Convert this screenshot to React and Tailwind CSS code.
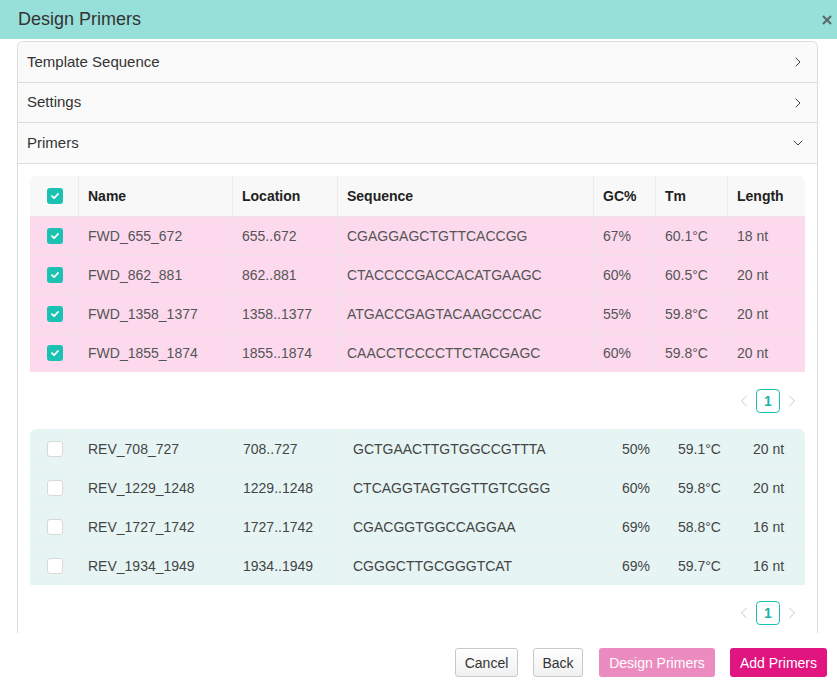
import React from 'react';
import { ChevronRight, ChevronDown, ChevronLeft } from 'lucide-react';

const forwardPrimers = [
    { name: 'FWD_655_672', location: '655..672', sequence: 'CGAGGAGCTGTTCACCGG', gc: '67%', tm: '60.1°C', length: '18 nt' },
    { name: 'FWD_862_881', location: '862..881', sequence: 'CTACCCCGACCACATGAAGC', gc: '60%', tm: '60.5°C', length: '20 nt' },
    { name: 'FWD_1358_1377', location: '1358..1377', sequence: 'ATGACCGAGTACAAGCCCAC', gc: '55%', tm: '59.8°C', length: '20 nt' },
    { name: 'FWD_1855_1874', location: '1855..1874', sequence: 'CAACCTCCCCTTCTACGAGC', gc: '60%', tm: '59.8°C', length: '20 nt' },
];

const reversePrimers = [
    { name: 'REV_708_727', location: '708..727', sequence: 'GCTGAACTTGTGGCCGTTTA', gc: '50%', tm: '59.1°C', length: '20 nt' },
    { name: 'REV_1229_1248', location: '1229..1248', sequence: 'CTCAGGTAGTGGTTGTCGGG', gc: '60%', tm: '59.8°C', length: '20 nt' },
    { name: 'REV_1727_1742', location: '1727..1742', sequence: 'CGACGGTGGCCAGGAA', gc: '69%', tm: '58.8°C', length: '16 nt' },
    { name: 'REV_1934_1949', location: '1934..1949', sequence: 'CGGGCTTGCGGGTCAT', gc: '69%', tm: '59.7°C', length: '16 nt' },
];

const Checkbox = ({ checked }) => (
    checked ? (
        <span className="w-4 h-4 rounded-[3px] bg-[#1bc2b3] flex items-center justify-center">
            <svg width="10" height="10" viewBox="0 0 10 10" fill="none">
                <path d="M2 5.2 4.1 7.2 8 3" stroke="white" strokeWidth="1.8" strokeLinecap="round" strokeLinejoin="round" />
            </svg>
        </span>
    ) : (
        <span className="w-4 h-4 rounded-[3px] bg-white border border-[#d9d9d9]"></span>
    )
);

const Pager = () => (
    <div className="flex items-center justify-end gap-[2px] pr-[3px]">
        <ChevronLeft size={20} strokeWidth={1} className="text-[#bdbdbd]" />
        <span className="w-6 h-6 rounded border border-[#1bc2b3] text-[#1bb3a6] font-bold text-sm flex items-center justify-center">1</span>
        <ChevronRight size={20} strokeWidth={1} className="text-[#bdbdbd]" />
    </div>
);

const AccordionHeader = ({ title, open, height }) => (
    <div className={`${height} flex items-center justify-between pl-[9px] pr-[11px] bg-[#fafafa] border-b border-[#ddd] text-[15px] text-[#333]`}>
        <span>{title}</span>
        {open
            ? <ChevronDown size={16} strokeWidth={1.4} className="text-[#333]" />
            : <ChevronRight size={16} strokeWidth={1.4} className="text-[#333]" />}
    </div>
);

const fwdCols = 'grid grid-cols-[48px_154px_105px_256px_62px_72px_1fr]';
const revCols = 'grid grid-cols-[48px_155px_110px_269px_56px_76px_1fr]';

const App = () => {
    return (
        <div className="w-[837px] h-[694px] bg-white overflow-hidden" style={{ fontFamily: '"Liberation Sans", Arial, sans-serif' }}>
            <div className="h-[39px] bg-[#97e0d9] flex items-center justify-between pl-[18px] pr-[5px]">
                <h1 className="text-[18px] text-[#333]">Design Primers</h1>
                <svg width="10" height="10" viewBox="0 0 10 10" className="mt-[1px]">
                    <path d="M1 1 9 9M9 1 1 9" stroke="#5c6a6e" strokeWidth="2.2" />
                </svg>
            </div>

            <div className="mt-[2px] ml-[17px] mr-[19px] h-[592px] border border-b-0 border-[#ddd] rounded-t-md overflow-hidden">
                <AccordionHeader title="Template Sequence" height="h-[41px]" />
                <AccordionHeader title="Settings" height="h-[40px]" />
                <AccordionHeader title="Primers" height="h-[41px]" open />

                <div className="px-3 pt-3 text-sm">
                    {/* forward primers */}
                    <div className="rounded-t-md overflow-hidden">
                        <div className={`${fwdCols} h-[40px] bg-[#f8f8f8] font-bold text-[#222]`}>
                            <div className="flex items-center justify-center pl-px"><Checkbox checked /></div>
                            <div className="flex items-center px-[9px] border-l border-[#ececec]">Name</div>
                            <div className="flex items-center px-[9px] border-l border-[#ececec]">Location</div>
                            <div className="flex items-center px-[9px] border-l border-[#ececec]">Sequence</div>
                            <div className="flex items-center px-[9px] border-l border-[#ececec]">GC%</div>
                            <div className="flex items-center px-[9px] border-l border-[#ececec]">Tm</div>
                            <div className="flex items-center px-[9px] border-l border-[#ececec]">Length</div>
                        </div>
                        {forwardPrimers.map(p => (
                            <div key={p.name} className={`${fwdCols} h-[39px] bg-[#fcd9ed] border-t border-[#efe4ea] text-[#555]`}>
                                <div className="flex items-center justify-center pl-px"><Checkbox checked /></div>
                                <div className="flex items-center px-[9px] border-l border-[#efe4ea]">{p.name}</div>
                                <div className="flex items-center px-[9px] border-l border-[#efe4ea]">{p.location}</div>
                                <div className="flex items-center px-[9px] border-l border-[#efe4ea]">{p.sequence}</div>
                                <div className="flex items-center px-[9px] border-l border-[#efe4ea]">{p.gc}</div>
                                <div className="flex items-center px-[9px] border-l border-[#efe4ea]">{p.tm}</div>
                                <div className="flex items-center px-[9px] border-l border-[#efe4ea]">{p.length}</div>
                            </div>
                        ))}
                    </div>
                    <div className="h-[57px] flex items-center justify-end">
                        <Pager />
                    </div>

                    {/* reverse primers */}
                    <div className="rounded-t-md overflow-hidden">
                        {reversePrimers.map((p, i) => (
                            <div key={p.name} className={`${revCols} h-[39px] bg-[#e6f5f4] text-[#444] ${i > 0 ? 'border-t border-[#ecf1f0]' : ''}`}>
                                <div className="flex items-center justify-center pl-px"><Checkbox /></div>
                                <div className="flex items-center px-[9px] border-l border-[#ecf1f0]">{p.name}</div>
                                <div className="flex items-center px-[9px] border-l border-[#ecf1f0]">{p.location}</div>
                                <div className="flex items-center px-[9px] border-l border-[#ecf1f0]">{p.sequence}</div>
                                <div className="flex items-center px-[9px] border-l border-[#ecf1f0]">{p.gc}</div>
                                <div className="flex items-center px-[9px] border-l border-[#ecf1f0]">{p.tm}</div>
                                <div className="flex items-center px-[8px] border-l border-[#ecf1f0]">{p.length}</div>
                            </div>
                        ))}
                    </div>
                    <div className="h-[55px] flex items-center justify-end">
                        <Pager />
                    </div>
                </div>
            </div>

            <div className="flex justify-end pr-[10px] mt-[15px] text-sm">
                <button className="h-[29px] w-[63px] rounded-[3px] border border-[#c8c8c8] bg-gradient-to-b from-white to-[#f0f0f0] text-[#333]">Cancel</button>
                <button className="h-[29px] w-[50px] ml-[15px] rounded-[3px] border border-[#c8c8c8] bg-gradient-to-b from-white to-[#f0f0f0] text-[#333]">Back</button>
                <button className="h-[29px] w-[116px] ml-[16px] rounded-[3px] bg-[#eb8bbf] text-white">Design Primers</button>
                <button className="h-[29px] w-[97px] ml-[15px] rounded-[3px] bg-[#e0157f] text-white">Add Primers</button>
            </div>
        </div>
    );
};

export default App;
